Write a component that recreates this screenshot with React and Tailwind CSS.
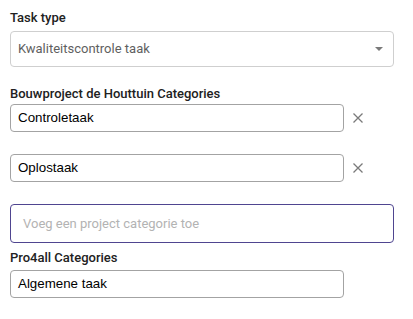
function CloseIcon() {
  return (
    <svg width="12" height="12" viewBox="0 0 12 12" className="text-[#7a7a7a]">
      <path d="M1.5 1.5 L10.5 10.5 M10.5 1.5 L1.5 10.5" stroke="currentColor" strokeWidth="1.3" fill="none" />
    </svg>
  );
}

function CategoryRow({ value, removable = true }) {
  return (
    <div className="flex items-center">
      <div className="w-[334px] h-[28px] border border-[#a3a3a3] rounded-[4px] flex items-center pl-[7px] text-[13.33px] text-black font-['Liberation_Sans',Arial,sans-serif]">
        {value}
      </div>
      {removable && (
        <button className="ml-[8px] w-[12px] h-[12px] flex items-center justify-center">
          <CloseIcon />
        </button>
      )}
    </div>
  );
}

export default function App() {
  const projectCategories = ["Controletaak", "Oplostaak"];

  return (
    <div className="w-[413px] h-[319px] bg-white px-[10px] pt-[10px] font-['Roboto',sans-serif]">
      <div className="text-[13px] leading-[16px] font-medium text-[#212121]">Task type</div>
      <div className="mt-[5px] w-[384px] h-[36px] border border-[#cfcfcf] rounded-[4px] flex items-center justify-between pl-[7px] pr-[10px]">
        <span className="text-[13px] text-[#5f5f5f]">Kwaliteitscontrole taak</span>
        <svg width="8" height="4" viewBox="0 0 8 4">
          <path d="M0 0 L8 0 L4 4 Z" fill="#7a7a7a" />
        </svg>
      </div>

      <div className="mt-[19px] text-[13px] leading-[16px] font-medium text-[#212121]">
        Bouwproject de Houttuin Categories
      </div>
      <div className="mt-[2px] flex flex-col gap-[22px]">
        {projectCategories.map((c) => (
          <CategoryRow key={c} value={c} />
        ))}
        <div className="w-[384px] h-[39px] border border-[#4f4590] rounded-[4px] flex items-center pl-[12px] text-[13px] text-[#b3b3b3]">
          Voeg een project categorie toe
        </div>
      </div>

      <div className="mt-[7px] text-[13px] leading-[16px] font-medium text-[#212121]">Pro4all Categories</div>
      <div className="mt-[4px]">
        <CategoryRow value="Algemene taak" removable={false} />
      </div>
    </div>
  );
}
